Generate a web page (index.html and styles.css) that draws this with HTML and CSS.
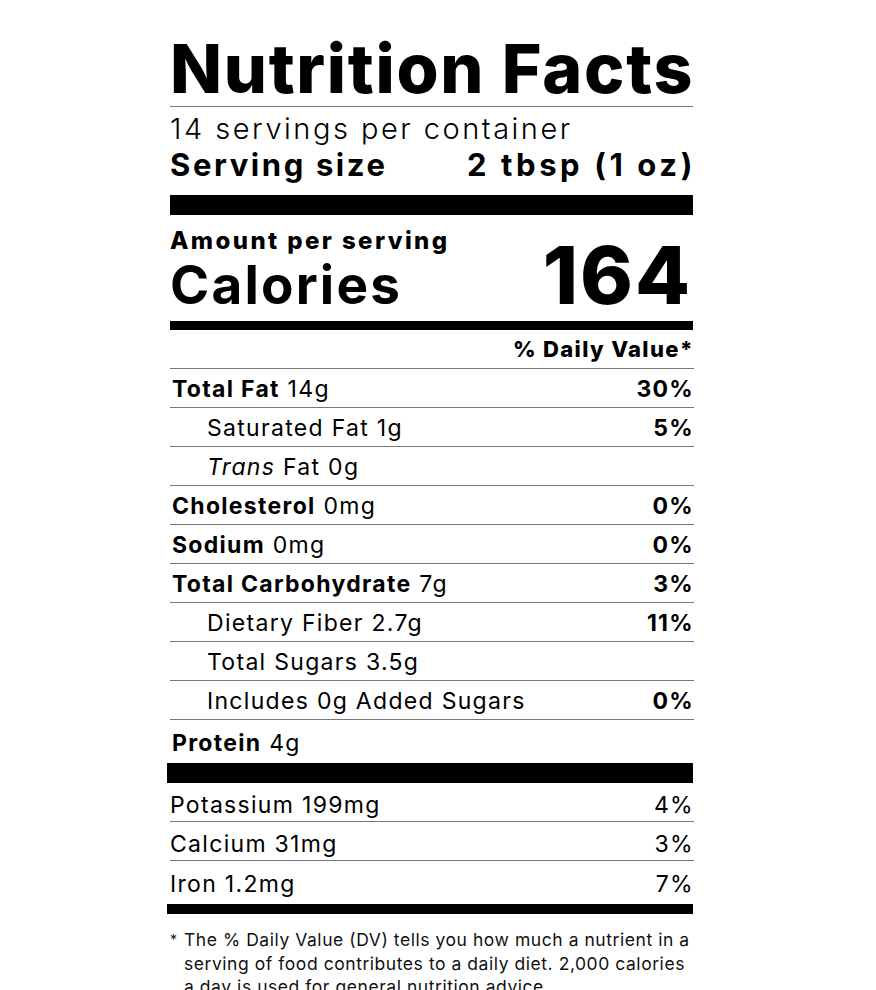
FILE: index.html
```html
<!DOCTYPE html>
<html lang="en">
<head>
<meta charset="utf-8">
<title>Nutrition Facts</title>
<link rel="stylesheet" href="styles.css">
</head>
<body>
<section class="label">
  <h1 class="title">Nutrition Facts</h1>
  <div class="servings">14 servings per container</div>
  <div class="serving-size"><span>Serving size</span><span class="serving-value">2 tbsp (1 oz)</span></div>
  <div class="bar bar-thick"></div>
  <div class="calories-block">
    <div class="calories-left">
      <div class="amount">Amount per serving</div>
      <div class="calories">Calories</div>
    </div>
    <div class="cal-value">164</div>
  </div>
  <div class="bar bar-mid"></div>
  <div class="dv-head">% Daily Value*</div>
  <div class="row"><span><b>Total Fat</b> 14g</span><b>30%</b></div>
  <div class="row sub"><span>Saturated Fat 1g</span><b>5%</b></div>
  <div class="row sub"><span><i>Trans</i> Fat 0g</span></div>
  <div class="row"><span><b>Cholesterol</b> 0mg</span><b>0%</b></div>
  <div class="row"><span><b>Sodium</b> 0mg</span><b>0%</b></div>
  <div class="row"><span><b>Total Carbohydrate</b> 7g</span><b>3%</b></div>
  <div class="row sub"><span>Dietary Fiber 2.7g</span><b>11%</b></div>
  <div class="row sub"><span>Total Sugars 3.5g</span></div>
  <div class="row sub"><span>Includes 0g Added Sugars</span><b>0%</b></div>
  <div class="row last"><span><b>Protein</b> 4g</span></div>
  <div class="bar bar-wide-thick"></div>
  <div class="row min"><span>Potassium 199mg</span><span>4%</span></div>
  <div class="row min"><span>Calcium 31mg</span><span>3%</span></div>
  <div class="row min last"><span>Iron 1.2mg</span><span>7%</span></div>
  <div class="bar bar-bottom"></div>
  <p class="footnote"><span class="star">*</span><span>The % Daily Value (DV) tells you how much a nutrient in a serving of food contributes to a daily diet. 2,000 calories a day is used for general nutrition advice.</span></p>
</section>
</body>
</html>
```
FILE: styles.css
```css
* { box-sizing: border-box; }
html, body { margin: 0; padding: 0; background: #fff; }
body {
  font-family: Inter, "Noto Sans", "DejaVu Sans", sans-serif;
  color: #000;
}
.label {
  width: 523px;
  margin-left: 170px;
  padding-top: 33px;
}
.title {
  margin: 0;
  font-size: 68px;
  font-weight: 800;
  line-height: 70px;
  letter-spacing: 1.7px;
  border-bottom: 1px solid #777;
  padding-bottom: 3px;
  white-space: nowrap;
}
.servings {
  font-size: 29px;
  font-weight: 300;
  line-height: 34px;
  margin-top: 5px;
  letter-spacing: 2.5px;
}
.serving-size {
  display: flex;
  justify-content: space-between;
  font-size: 31px;
  font-weight: 700;
  line-height: 36px;
  margin-top: 1px;
  letter-spacing: 2.6px;
  margin-right: -3px;
}
.serving-value { letter-spacing: 3.6px; }
.bar { background: #000; }
.bar-thick { height: 20px; margin-top: 12px; }
.bar-mid { height: 9px; }
.bar-wide-thick { height: 20px; margin-left: -3px; }
.bar-bottom { height: 10px; margin-left: -3px; }
.calories-block {
  display: flex;
  justify-content: space-between;
  align-items: flex-end;
  height: 106px;
  padding-bottom: 6px;
}
.amount {
  font-size: 24px;
  font-weight: 800;
  line-height: 28px;
  margin-top: 8px;
  letter-spacing: 2.4px;
}
.calories {
  font-size: 53px;
  font-weight: 700;
  line-height: 60px;
  letter-spacing: 2.2px;
}
.cal-value {
  font-size: 80px;
  font-weight: 800;
  line-height: 80px;
  margin-right: 1px;
  letter-spacing: 2px;
}
.dv-head {
  text-align: right;
  font-size: 22px;
  font-weight: 800;
  line-height: 38px;
  border-bottom: 1px solid #777;
  letter-spacing: 1.35px;
  margin-right: -1px;
}
.row {
  display: flex;
  justify-content: space-between;
  align-items: center;
  height: 39px;
  font-size: 23px;
  font-weight: 400;
  letter-spacing: 1.3px;
  border-bottom: 1px solid #777;
  padding-top: 2px;
  padding-left: 2px;
  margin-right: -1px;
}
.row b { font-weight: 700; }
.row.sub { padding-left: 37px; }
.row.last { border-bottom: none; height: 43px; }
.row.min { padding-left: 0; padding-top: 5px; }
.row.min.last { height: 43px; padding-top: 3px; }
.footnote {
  display: flex;
  margin: 14px 0 0;
  font-size: 17.5px;
  line-height: 23.5px;
  letter-spacing: 0.55px;
  color: #111;
}
.star { width: 14px; flex: none; font-size: 14px; }
```
